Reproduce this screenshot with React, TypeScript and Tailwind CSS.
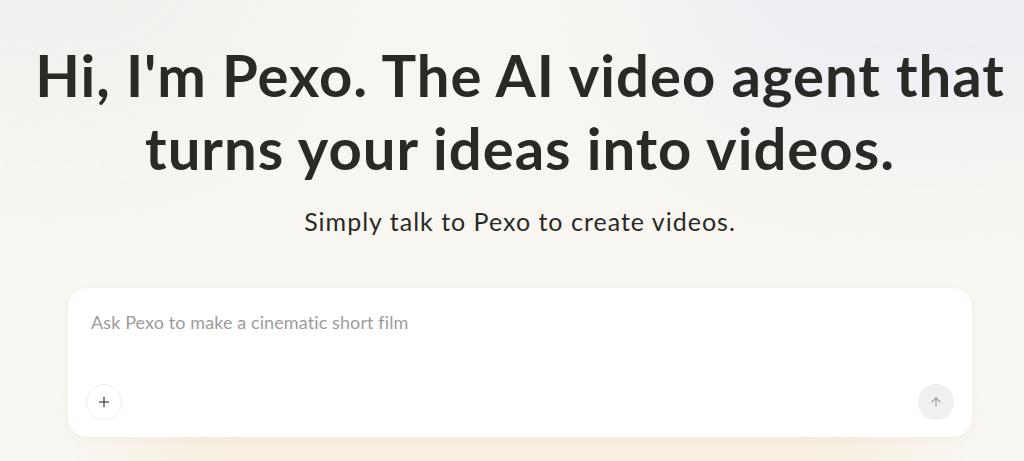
import { Plus, ArrowUp } from 'lucide-react';

const App = () => {
  return (
    <div
      className="relative h-[461px] w-full overflow-hidden bg-[#f8f6f1] text-[#2a2926]"
      style={{ fontFamily: 'Lato, "Noto Sans", sans-serif' }}
    >
      {/* soft tint in the upper corners */}
      <div className="pointer-events-none absolute -right-40 -top-44 h-[300px] w-[520px] rounded-full bg-[#eeedf3] blur-3xl" />
      <div className="pointer-events-none absolute -left-40 -top-48 h-[300px] w-[420px] rounded-full bg-[#f1f0ee] blur-3xl" />

      <div className="relative flex flex-col items-center pl-[16px] pt-[38px]">
        <h1 className="text-center text-[58px] font-bold leading-[73px] tracking-[1px]">
          Hi, I'm Pexo. The AI video agent that
          <br />
          turns your ideas into videos.
        </h1>
        <p className="mt-[21px] text-[25px] leading-[32px] tracking-[1px]">Simply talk to Pexo to create videos.</p>

        <div className="relative mt-[51px] w-[904px]">
          {/* warm glow under the prompt box */}
          <div className="pointer-events-none absolute -bottom-10 left-16 right-16 h-16 rounded-full bg-[#f6e6d0] opacity-80 blur-2xl" />
          <div className="relative flex h-[149px] flex-col justify-between rounded-[20px] bg-white px-[18px] pb-[17px] pt-[21px] shadow-[0_2px_10px_rgba(120,100,70,0.04)]">
            <div className="px-[5px] text-[18px] tracking-[0.1px] text-[#9c9c9c]">Ask Pexo to make a cinematic short film</div>
            <div className="flex items-center justify-between">
              <button className="flex h-[36px] w-[36px] items-center justify-center rounded-full border border-[#ececec] bg-white text-[#222]">
                <Plus size={16} strokeWidth={1.6} />
              </button>
              <button className="flex h-[36px] w-[36px] items-center justify-center rounded-full bg-[#f0f0f0] text-[#9a9a9a]">
                <ArrowUp size={14} strokeWidth={2} />
              </button>
            </div>
          </div>
        </div>
      </div>
    </div>
  );
};

export default App;
